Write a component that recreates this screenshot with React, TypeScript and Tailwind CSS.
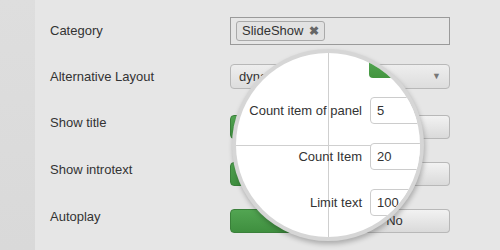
import React from 'react';

const font = { fontFamily: '"Liberation Sans", Arial, sans-serif' };

function Toggle({ showNo = true }: { showNo?: boolean }) {
  return (
    <div className="flex w-[220px] h-[24px]">
      <div className="w-[110px] h-full rounded-l-[4px] bg-gradient-to-b from-[#52a552] to-[#3f8f3f] border border-[#3a803a]" />
      <div className="flex-1 h-full rounded-r-[4px] border border-l-0 border-[#b8b8b8] bg-gradient-to-b from-[#f2f2f2] to-[#dadada] flex items-center justify-center text-[13px] text-[#333]">
        {showNo ? 'No' : ''}
      </div>
    </div>
  );
}

function Row({
  label,
  top,
  height,
  center,
  children,
}: {
  label: string;
  top: string;
  height: string;
  center?: boolean;
  children: React.ReactNode;
}) {
  return (
    <div className={`flex ${top} ${height} ${center ? 'items-center' : 'items-start'}`}>
      <div className={`w-[180px] shrink-0 text-[13px] text-[#333] ${center ? '' : 'leading-[16px]'}`}>{label}</div>
      {children}
    </div>
  );
}

function LensRow({ label, value }: { label: string; value: string }) {
  return (
    <div className="flex items-center h-[27px]">
      <div className="w-[126px] shrink-0 whitespace-nowrap text-right text-[13px] text-[#333]">{label}</div>
      <div className="ml-[8px] w-[90px] h-[27px] shrink-0 rounded-[4px] border border-[#cccccc] bg-white flex items-center px-[6px] text-[13px] text-[#333]">
        {value}
      </div>
    </div>
  );
}

export default function App() {
  return (
    <div className="relative w-[500px] h-[250px] overflow-hidden flex bg-[#e6e6e6]" style={font}>
      <div className="w-[35px] h-full bg-gradient-to-b from-[#dedede] to-[#d9d9d9]" />

      <div className="flex-1 flex flex-col pl-[15px]">
        <Row label="Category" top="mt-[17px]" height="h-[28px]" center>
          <div className="w-[220px] h-[28px] border border-[#9a9a9a] flex items-center px-[5px]">
            <div className="h-[20px] px-[5px] rounded-[3px] border border-[#aaaaaa] bg-[#e2e2e2] flex items-center gap-[6px] text-[13px] text-[#333]">
              SlideShow
              <span className="text-[#666] text-[12px] font-bold leading-none">✖</span>
            </div>
          </div>
        </Row>

        <Row label="Alternative Layout" top="mt-[19px]" height="h-[25px]" center>
          <div className="w-[220px] h-[25px] rounded-[4px] border border-[#b8b8b8] bg-gradient-to-b from-[#eeeeee] to-[#dddddd] flex items-center justify-between pl-[8px] pr-[8px] text-[13px] text-[#333]">
            <span>dynamic</span>
            <span className="text-[#777] text-[9px]">▼</span>
          </div>
        </Row>

        <Row label="Show title" top="mt-[26px]" height="h-[24px]">
          <Toggle />
        </Row>

        <Row label="Show introtext" top="mt-[23px]" height="h-[24px]">
          <Toggle />
        </Row>

        <Row label="Autoplay" top="mt-[23px]" height="h-[24px]">
          <Toggle />
        </Row>
      </div>

      {/* magnifier lens */}
      <div className="absolute left-[232px] top-[49px] w-[192px] h-[192px] rounded-full bg-[#d6d6d6] p-[4px] shadow-[1px_3px_5px_rgba(0,0,0,0.25)]">
        <div className="relative w-full h-full rounded-full bg-white overflow-hidden">
          <div className="absolute left-[133px] top-[6px] w-[70px] h-[19px] rounded-bl-[4px] bg-gradient-to-b from-[#52a552] to-[#43953f]" />
          <div className="absolute left-[92px] top-0 w-px h-full bg-[#cfcfcf]" />
          <div className="absolute top-[92px] left-0 h-px w-full bg-[#cfcfcf]" />
          <div className="relative flex flex-col gap-[19px] pt-[44px]">
            <LensRow label="Count item of panel" value="5" />
            <LensRow label="Count Item" value="20" />
            <LensRow label="Limit text" value="100" />
          </div>
        </div>
      </div>
    </div>
  );
}
